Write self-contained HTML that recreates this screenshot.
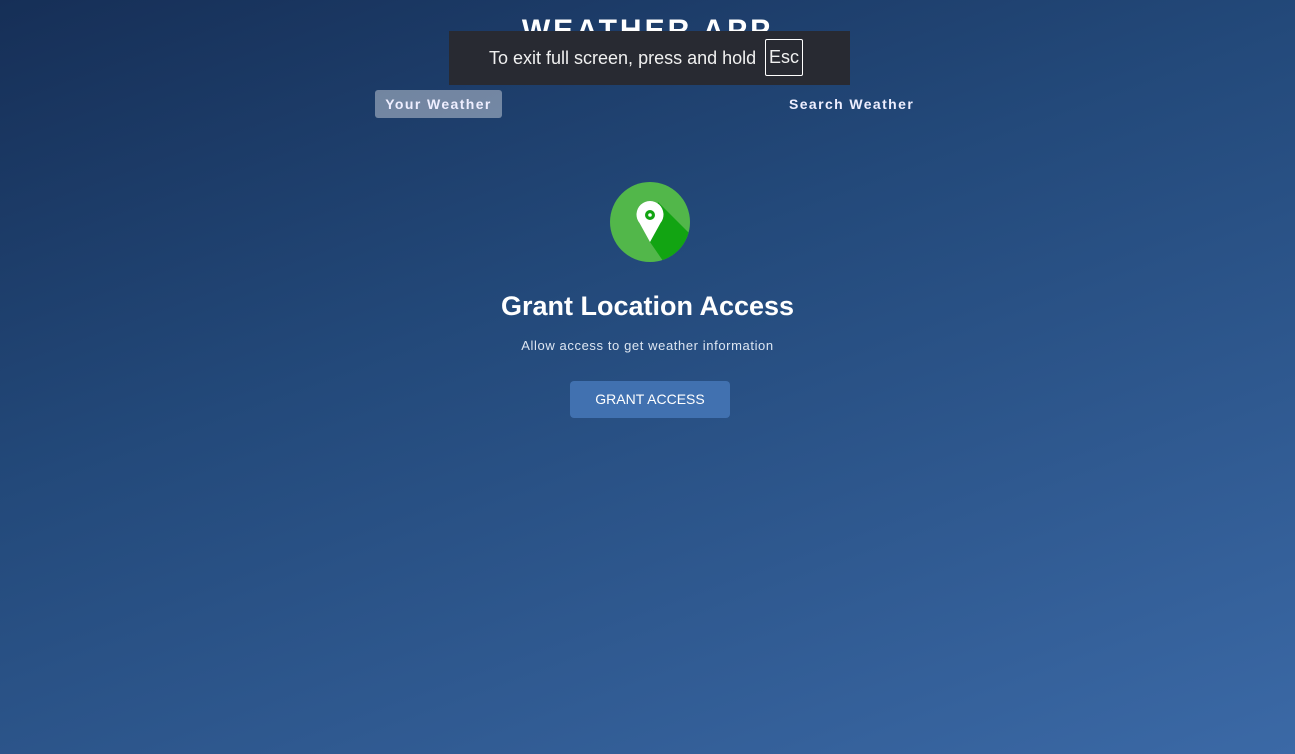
<!DOCTYPE html>
<html><head><meta charset="utf-8"><style>
html,body{margin:0;padding:0;width:1295px;height:754px;overflow:hidden;}
body{background:linear-gradient(160deg,#162f57 0%,#23497a 40%,#3b69a6 100%);font-family:"Liberation Sans",sans-serif;color:#fff;position:relative;}
.title{position:absolute;left:0;width:1295px;top:14px;text-align:center;font-size:30px;font-weight:bold;letter-spacing:3px;}
.bar{position:absolute;left:449px;top:31px;width:401px;height:54px;background:#282a32;}
.bar span{position:absolute;left:40px;top:17px;font-size:18px;color:#f0f0f0;}
.esc{position:absolute;left:316px;top:8px;width:38px;height:37px;border:1px solid #fff;border-radius:2px;box-sizing:border-box;font-size:18px;text-align:center;line-height:35px;color:#f0f0f0;}
.tab{position:absolute;top:90px;height:28px;line-height:28px;font-size:14px;font-weight:bold;letter-spacing:1.4px;color:#eef;}
.t1{left:375px;width:127px;background:rgba(255,255,255,0.38);border-radius:3px;text-align:center;}
.t2{left:789px;}
h2{position:absolute;left:0;width:1295px;top:291px;margin:0;text-align:center;font-size:27px;font-weight:bold;}
.sub{position:absolute;left:0;width:1295px;top:338px;text-align:center;font-size:13px;color:#dde6f2;letter-spacing:0.6px;}
.btn{position:absolute;left:570px;top:381px;width:160px;height:37px;background:#4171b0;border-radius:4px;text-align:center;line-height:37px;font-size:14px;color:#fff;}
</style></head><body>
<div class="title">WEATHER APP</div>
<div class="bar"><span>To exit full screen, press and hold</span><div class="esc">Esc</div></div>
<div class="tab t1">Your Weather</div>
<div class="tab t2">Search Weather</div>
<svg style="position:absolute;left:610px;top:182px" width="80" height="80" viewBox="0 0 80 80">
<defs><clipPath id="c"><circle cx="40" cy="40" r="40"/></clipPath></defs>
<circle cx="40" cy="40" r="40" fill="#52b74a"/>
<polygon clip-path="url(#c)" points="48,20 92,64 62,92 40,60" fill="#12a412"/>
<path d="M40 60 L29.5 41 A13.5 13.5 0 1 1 50.5 41 Z" fill="#fff"/>
<circle cx="40" cy="33" r="5" fill="#12a412"/>
<circle cx="40" cy="33" r="1.8" fill="#fff"/>
</svg>
<h2>Grant Location Access</h2>
<div class="sub">Allow access to get weather information</div>
<div class="btn">GRANT ACCESS</div>
</body></html>
